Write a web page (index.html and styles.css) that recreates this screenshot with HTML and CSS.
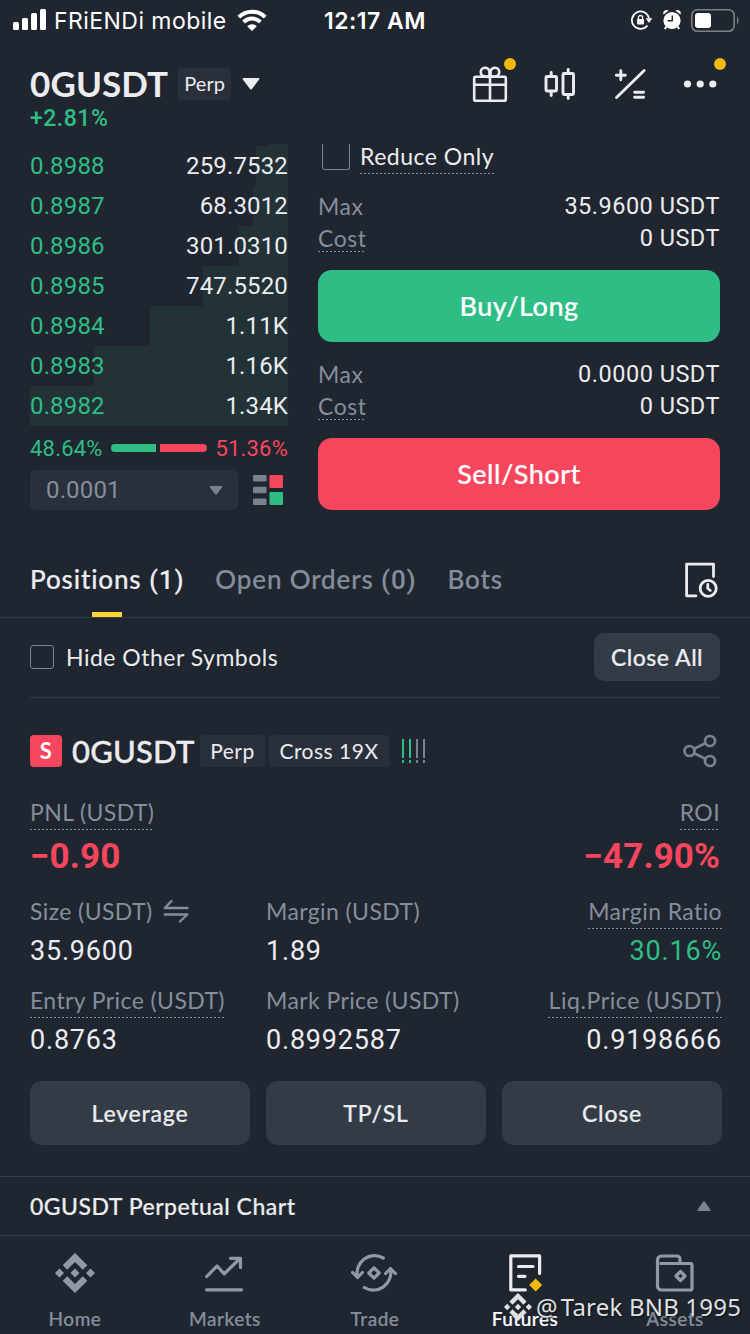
FILE: index.html
```html
<!DOCTYPE html>
<html lang="en">
<head>
    <meta charset="UTF-8">
    <meta name="viewport" content="width=device-width, initial-scale=1.0">
    <title>0GUSDT Perp</title>
    <link rel="stylesheet" href="styles.css">
</head>
<body>
    <div class="status-bar">
        <div class="carrier">
            <svg width="34" height="22" viewBox="0 0 34 22" fill="#fff">
                <rect x="0" y="13" width="6" height="8" rx="1.5"/>
                <rect x="9" y="9" width="6" height="12" rx="1.5"/>
                <rect x="18" y="4" width="6" height="17" rx="1.5"/>
                <rect x="27" y="0" width="6" height="21" rx="1.5"/>
            </svg>
            <span class="carrier-name">FRiENDi mobile</span>
            <svg width="30" height="22" viewBox="0 0 30 22" fill="none" stroke="#fff" stroke-width="4">
                <path d="M1.8 8.2a18.6 18.6 0 0 1 26.4 0"/>
                <path d="M6.6 13a12 12 0 0 1 16.8 0"/>
                <path d="M15 22l-4.8-4.8a6.8 6.8 0 0 1 9.6 0z" fill="#fff" stroke="none"/>
            </svg>
        </div>
        <div class="time">12:17 AM</div>
        <div class="status-icons">
            <svg width="22" height="20" viewBox="0 0 22 20" fill="none" stroke="#fff" stroke-width="1.7">
                <path d="M16.5 15.5A8.7 8.7 0 1 1 18 8"/>
                <path d="M14.7 8.3h6.6L18 13z" fill="#fff" stroke="none"/>
                <rect x="6" y="9" width="7" height="5.5" rx="1" fill="#fff" stroke="none"/>
                <path d="M7.4 9.5V7.6a2.1 2.1 0 0 1 4.2 0v1.9" stroke-width="1.3"/>
            </svg>
            <svg width="18" height="20" viewBox="0 0 18 20" fill="#fff">
                <circle cx="9" cy="10.5" r="8.6"/>
                <path d="M.5 4.5a3.2 3.2 0 0 1 5-3.7zM17.5 4.5a3.2 3.2 0 0 0-5-3.7z"/>
                <path d="M3.5 16.5L1.8 19M14.5 16.5l1.7 2.5" stroke="#fff" stroke-width="2"/>
                <path d="M9.3 5.5v5.3H4.6" fill="none" stroke="#202630" stroke-width="1.5"/>
            </svg>
            <svg width="48" height="23" viewBox="0 0 48 23">
                <rect x=".8" y=".8" width="42.4" height="21.4" rx="5.5" fill="none" stroke="#7b7f87" stroke-width="1.6"/>
                <rect x="4" y="4" width="16" height="15" rx="3" fill="#fff"/>
                <path d="M46 7.500c2 1.500 2 6.500 0 8z" fill="#7b7f87"/>
            </svg>
        </div>
    </div>

    <div class="header">
        <div class="pair">
            <div class="pair-row">
                <span class="pair-name">0GUSDT</span>
                <span class="tag">Perp</span>
                <svg width="18" height="12" viewBox="0 0 18 12" fill="#eaecef"><path d="M1.500 0h15q1.500 0 .6 1.400L10 11q-1 1.100-2 0L.9 1.400Q0 0 1.500 0z"/></svg>
            </div>
            <div class="change">+2.81%</div>
        </div>
        <div class="header-icons">
            <div class="header-icon">
                <svg width="36" height="40" viewBox="0 0 36 40" fill="none" stroke="#eaecef" stroke-width="2.6">
                    <rect x="2.200" y="12.700" width="31.600" height="24" rx="1.500"/>
                    <path d="M2 20.800h32M18 8v29"/>
                    <path d="M17.500 12.500h-5a4.400 4.400 0 1 1 5-5zM18.500 12.500h5a4.400 4.400 0 1 0-5-5z"/>
                </svg>
                <span class="dot"></span>
            </div>
            <div class="header-icon">
                <svg width="36" height="40" viewBox="0 0 36 40" fill="none" stroke="#eaecef" stroke-width="2.9" stroke-linecap="round">
                    <rect x="4" y="12.500" width="10.500" height="14.500" rx="1"/>
                    <rect x="21" y="9.500" width="10.500" height="21" rx="1"/>
                    <path d="M9.200 8.500v4M9.200 27.500v4M26.200 5.500v4M26.200 30.500v4"/>
                </svg>
            </div>
            <div class="header-icon">
                <svg width="36" height="40" viewBox="0 0 36 40" fill="none" stroke="#eaecef" stroke-width="2.9" stroke-linecap="round">
                    <path d="M4.500 33.500L32.200 6.500M4.300 11.200h9M8.800 6.700v9M22.600 28.300h9M22.600 33.300h9"/>
                </svg>
            </div>
            <div class="header-icon">
                <svg width="36" height="40" viewBox="0 0 36 40" fill="#eaecef">
                    <circle cx="5.500" cy="20" r="3.600"/><circle cx="18.200" cy="20" r="3.600"/><circle cx="30.800" cy="20" r="3.600"/>
                </svg>
                <span class="dot"></span>
            </div>
        </div>
    </div>

    <div class="trade">
        <div class="book">
            <div class="book-edge"></div>
            <div class="book-row" style="--depth: 32px"><span>0.8988</span><span class="qty">259.7532</span></div>
            <div class="book-row" style="--depth: 35px"><span>0.8987</span><span class="qty">68.3012</span></div>
            <div class="book-row" style="--depth: 49px"><span>0.8986</span><span class="qty">301.0310</span></div>
            <div class="book-row" style="--depth: 85px"><span>0.8985</span><span class="qty">747.5520</span></div>
            <div class="book-row" style="--depth: 138px"><span>0.8984</span><span class="qty">1.11K</span></div>
            <div class="book-row" style="--depth: 194px"><span>0.8983</span><span class="qty">1.16K</span></div>
            <div class="book-row" style="--depth: 258px"><span>0.8982</span><span class="qty">1.34K</span></div>
            <div class="ratio">
                <span class="ratio-buy">48.64%</span>
                <div class="ratio-bar"><div class="bar-buy"></div><div class="bar-sell"></div></div>
                <span class="ratio-sell">51.36%</span>
            </div>
            <div class="book-tools">
                <div class="tick-select">
                    <span>0.0001</span>
                    <svg width="14" height="9" viewBox="0 0 14 9" fill="#7b828d"><path d="M1.500 0h11q1.500 0 .6 1.300L8 8q-1 1.200-2 0L.9 1.300Q0 0 1.500 0z"/></svg>
                </div>
                <svg width="30" height="30" viewBox="0 0 30 30">
                    <g fill="#7b828d">
                        <rect y="0" width="13.500" height="6.500" rx="1"/>
                        <rect y="11.700" width="13.500" height="6.500" rx="1"/>
                        <rect y="23.500" width="13.500" height="6.500" rx="1"/>
                    </g>
                    <rect x="16.500" width="13.500" height="13" rx="1" fill="#f6465d"/>
                    <rect x="16.500" y="17" width="13.500" height="13" rx="1" fill="#2ebd85"/>
                </svg>
            </div>
        </div>

        <div class="order">
            <div class="reduce">
                <span class="checkbox-cut"></span>
                <span class="reduce-label dashed">Reduce Only</span>
            </div>
            <div class="limits">
                <div class="limit"><span>Max</span><span class="amount">35.9600 USDT</span></div>
                <div class="limit"><span class="dashed">Cost</span><span class="amount">0 USDT</span></div>
            </div>
            <button class="btn-order buy">Buy/Long</button>
            <div class="limits">
                <div class="limit"><span>Max</span><span class="amount">0.0000 USDT</span></div>
                <div class="limit"><span class="dashed">Cost</span><span class="amount">0 USDT</span></div>
            </div>
            <button class="btn-order sell">Sell/Short</button>
        </div>
    </div>

    <div class="tabs">
        <div class="tab active">Positions <span class="count">(1)</span></div>
        <div class="tab">Open Orders <span class="count">(0)</span></div>
        <div class="tab">Bots</div>
        <svg class="history" width="36" height="40" viewBox="0 0 36 40" fill="none" stroke="#eaecef" stroke-width="2.8" stroke-linecap="round" stroke-linejoin="round">
            <path d="M29.500 16.500V4.200H2.600v31.600H12"/>
            <circle cx="24.200" cy="28.400" r="8"/>
            <path d="M23.800 24.500v4l2.500 2"/>
        </svg>
    </div>

    <div class="filter">
        <span class="checkbox"></span>
        <span class="filter-label">Hide Other Symbols</span>
        <button class="close-all">Close All</button>
    </div>

    <div class="position">
        <div class="position-head">
            <span class="side">S</span>
            <span class="position-name">0GUSDT</span>
            <span class="tag tag-perp">Perp</span>
            <span class="tag tag-cross">Cross 19X</span>
            <svg class="risk" width="26" height="26" viewBox="0 0 26 26">
                <path d="M2 1v19M9 1v19M2 22v3M9 22v3" stroke="#2ebd85" stroke-width="2"/>
                <path d="M16 1v19M23 1v19M16 22v3M23 22v3" stroke="#7b828d" stroke-width="2"/>
            </svg>
            <svg class="share" width="34" height="34" viewBox="0 0 34 34" fill="none" stroke="#7b828d" stroke-width="2.7">
                <circle cx="6.500" cy="17" r="5"/><circle cx="27" cy="7" r="5"/><circle cx="27" cy="27" r="5"/>
                <path d="M11 14.800l11.500-5.600M11 19.200l11.500 5.600"/>
            </svg>
        </div>

        <div class="pnl-row">
            <div><div class="label"><span class="dashed">PNL (USDT)</span></div><div class="pnl">−0.90</div></div>
            <div class="right"><div class="label"><span class="dashed">ROI</span></div><div class="pnl">−47.90%</div></div>
        </div>

        <div class="stats">
            <div class="stat">
                <div class="label">Size (USDT)
                    <svg width="26" height="24" viewBox="0 0 26 24" fill="none" stroke="#848e9c" stroke-width="2.4" stroke-linecap="round" stroke-linejoin="round"><path d="M24.500 9H1.800L8.500 2M1.800 15.500h22.500L17 22.500"/></svg>
                </div>
                <div class="value">35.9600</div>
            </div>
            <div class="stat"><div class="label">Margin (USDT)</div><div class="value">1.89</div></div>
            <div class="stat right"><div class="label"><span class="dashed">Margin Ratio</span></div><div class="value green">30.16%</div></div>
            <div class="stat"><div class="label"><span class="dashed">Entry Price (USDT)</span></div><div class="value">0.8763</div></div>
            <div class="stat"><div class="label">Mark Price (USDT)</div><div class="value">0.8992587</div></div>
            <div class="stat right"><div class="label"><span class="dashed liq">Liq.Price (USDT)</span></div><div class="value">0.9198666</div></div>
        </div>

        <div class="actions">
            <button>Leverage</button>
            <button>TP/SL</button>
            <button>Close</button>
        </div>
    </div>

    <div class="chart-bar">
        <span>0GUSDT Perpetual Chart</span>
        <svg width="14" height="10" viewBox="0 0 14 10" fill="#7b828d"><path d="M1.200 10h11.600q1.500 0 .6-1.300L8 .8Q7-.4 6 .8L.6 8.700Q-.3 10 1.200 10z"/></svg>
    </div>

    <div class="nav">
        <div class="nav-item">
            <svg width="40" height="40" viewBox="0 0 40 40" fill="#9299a6">
                <path d="M20 0l12.300 12.300-4.500 4.500-7.800-7.800-7.800 7.800-4.500-4.500zM20 40l12.300-12.300-4.500-4.500-7.800 7.800-7.800-7.800-4.500 4.500zM20 15.500l4.500 4.500-4.500 4.500-4.500-4.500zM4.500 15.500L9 20l-4.500 4.500L0 20zM35.500 15.500L40 20l-4.500 4.500L31 20z"/>
            </svg>
            <span>Home</span>
        </div>
        <div class="nav-item">
            <svg width="40" height="40" viewBox="0 0 40 40" fill="none" stroke="#9299a6" stroke-width="3.2" stroke-linecap="round" stroke-linejoin="round">
                <path d="M1.800 23.500l10.200-10.500 7.200 7.800L35 5.500M25.500 5.300h10V14.500M1.600 36.800h35"/>
            </svg>
            <span>Markets</span>
        </div>
        <div class="nav-item">
            <svg width="48" height="40" viewBox="0 0 48 40" fill="none" stroke="#9299a6" stroke-width="3.2" stroke-linecap="round" stroke-linejoin="round">
                <path d="M32.300 5A17.500 17.500 0 0 0 6.500 24M1.600 19.500l4.900 5 4.900-5M13.300 34.500A17.500 17.500 0 0 0 39.500 16M34.600 20.500l4.900-5 4.900 5M23 14.800l5.200 5.200-5.200 5.200-5.200-5.200z"/>
            </svg>
            <span>Trade</span>
        </div>
        <div class="nav-item active">
            <svg width="40" height="40" viewBox="0 0 40 40" fill="none" stroke="#eaecef" stroke-width="3.2" stroke-linecap="round" stroke-linejoin="round">
                <path d="M34.600 20.500V2.900H5.800v34h14.500M13.500 13.500h14.500M13.500 23.300h6.500"/>
                <path d="M30.700 25.500l6.500 6.500-6.500 6.500-6.500-6.500z" fill="#f0b90b" stroke="none"/>
            </svg>
            <span>Futures</span>
        </div>
        <div class="nav-item">
            <svg width="40" height="40" viewBox="0 0 40 40" fill="none" stroke="#9299a6" stroke-width="3.2" stroke-linejoin="round">
                <path d="M25 10.500V6a3 3 0 0 0-3-3H6.500a4 4 0 0 0-4 4v26a4 4 0 0 0 4 4H35.500a1.500 1.500 0 0 0 1.500-1.500V12a1.500 1.500 0 0 0-1.500-1.500H4.500M25.500 18.500l4.500 4.500-4.500 4.500-4.500-4.500z"/>
            </svg>
            <span>Assets</span>
        </div>
    </div>

    <div class="watermark">
        <svg width="28" height="28" viewBox="0 0 40 40" fill="#dfe1e4">
            <path d="M20 0l12.300 12.300-4.500 4.500-7.800-7.800-7.800 7.800-4.500-4.500zM20 40l12.300-12.300-4.500-4.500-7.800 7.800-7.800-7.800-4.500 4.500zM20 15.500l4.500 4.500-4.500 4.500-4.500-4.500zM4.500 15.500L9 20l-4.500 4.500L0 20zM35.500 15.500L40 20l-4.500 4.500L31 20z"/>
        </svg>
        <span class="at">@</span><span>Tarek BNB 1995</span>
    </div>
</body>
</html>
```
FILE: styles.css
```css
* {
    box-sizing: border-box;
}

body {
    margin: 0;
    width: 750px;
    height: 1334px;
    overflow: hidden;
    position: relative;
    background-color: #202630;
    color: #eaecef;
    font-family: Lato, sans-serif;
    font-size: 23px;
    letter-spacing: 0.5px;
}

button {
    border: none;
    padding: 0 0 1px;
    color: #eaecef;
    font-family: inherit;
    font-weight: 500;
    letter-spacing: inherit;
    -webkit-text-stroke: 0.2px;
}

svg {
    display: block;
    flex: none;
}

.status-bar {
    display: grid;
    grid-template-columns: 1fr auto 1fr;
    align-items: center;
    height: 40px;
    padding: 0 11px 0 13px;
    font-family: Inter, sans-serif;
    color: #fff;
    letter-spacing: 0;
}

.carrier {
    display: flex;
    align-items: center;
    gap: 7px;
}

.carrier-name {
    font-size: 23px;
    letter-spacing: 0.45px;
    margin-right: 3px;
    padding-top: 2px;
}

.time {
    padding-top: 2px;
    font-size: 23px;
    font-weight: 600;
    letter-spacing: 0.5px;
    margin-left: -2px;
}

.status-icons {
    display: flex;
    align-items: center;
    justify-content: flex-end;
    gap: 10px;
}

.header {
    display: flex;
    justify-content: space-between;
    height: 104px;
    padding: 24px 30px 0;
}

.pair-row {
    display: flex;
    align-items: center;
    height: 40px;
}

.pair-name {
    font-size: 35px;
    font-weight: 700;
    letter-spacing: 0.1px;
    margin-right: 10px;
    padding-bottom: 2px;
}

.tag {
    height: 32px;
    line-height: 31px;
    padding: 0 6px;
    border-radius: 4px;
    background-color: #2a303b;
    font-size: 20px;
    letter-spacing: 0.1px;
    white-space: nowrap;
}

.pair-row svg {
    margin-left: 11px;
}

.change {
    font-family: Roboto, sans-serif;
    font-size: 23px;
    font-weight: 500;
    line-height: 30px;
    color: #2ebd85;
}

.header-icons {
    display: flex;
    gap: 34px;
    padding-right: 2px;
}

.header-icon {
    position: relative;
    height: 40px;
}

.dot {
    position: absolute;
    top: -6px;
    right: -8px;
    width: 12px;
    height: 12px;
    border-radius: 50%;
    background-color: #f0b90b;
}

.trade {
    display: flex;
    gap: 30px;
    height: 396px;
    padding: 0 30px;
}

.book {
    width: 258px;
    font-family: Roboto, sans-serif;
    font-size: 24px;
    letter-spacing: 0.15px;
    color: #2ebd85;
}

.book-edge {
    width: 19px;
    height: 2px;
    margin-left: auto;
    background-color: #223237;
}

.book-row {
    display: flex;
    justify-content: space-between;
    height: 40px;
    line-height: 41px;
    background: linear-gradient(#223237, #223237) right / var(--depth) 100% no-repeat;
}

.qty {
    color: #eaecef;
}

.ratio {
    display: flex;
    align-items: center;
    justify-content: space-between;
    height: 44px;
    font-size: 22px;
    letter-spacing: 0.2px;
}

.ratio-sell {
    color: #f6465d;
}

.ratio-bar {
    display: flex;
    gap: 4px;
    width: 96px;
    height: 8px;
    border-radius: 4px;
    overflow: hidden;
}

.bar-buy {
    width: 45px;
    background-color: #2ebd85;
}

.bar-sell {
    flex: 1;
    background-color: #f6465d;
}

.book-tools {
    display: flex;
    align-items: center;
    gap: 15px;
}

.tick-select {
    display: flex;
    align-items: center;
    justify-content: space-between;
    width: 208px;
    height: 40px;
    padding: 0 15px 0 16px;
    border-radius: 6px;
    background-color: #2a303b;
    color: #848e9c;
}

.order {
    width: 402px;
}

.reduce {
    display: flex;
    gap: 10px;
    height: 46px;
    padding-left: 4px;
}

.checkbox-cut {
    width: 28px;
    height: 26px;
    border: 1px solid #7b828d;
    border-top: none;
    border-radius: 0 0 3px 3px;
}

.dashed {
    background: repeating-linear-gradient(90deg, #848e9c 0 2px, transparent 2px 4px) bottom / 100% 1px no-repeat;
}

.reduce-label {
    height: 30px;
    line-height: 25px;
}

.limits {
    height: 80px;
    color: #848e9c;
}

.limit {
    display: flex;
    justify-content: space-between;
    height: 32px;
    line-height: 32px;
}

.limit .dashed {
    height: 30px;
}

.amount {
    color: #eaecef;
    font-family: Roboto, sans-serif;
    font-size: 23.5px;
    line-height: 33px;
}

.btn-order {
    display: block;
    width: 402px;
    height: 72px;
    margin-bottom: 16px;
    border-radius: 14px;
    font-size: 27px;
    color: #fff;
}

.buy {
    background-color: #2ebd85;
}

.sell {
    background-color: #f6465d;
}

.tabs {
    display: flex;
    gap: 31px;
    height: 78px;
    padding: 0 30px;
    border-bottom: 1px solid #333b47;
    font-size: 26px;
    font-weight: 500;
    letter-spacing: 0.85px;
    line-height: 79px;
    color: #848e9c;
    -webkit-text-stroke: 0.2px;
}

.count {
    font-family: Roboto, sans-serif;
    -webkit-text-stroke: 0;
}

.tab {
    position: relative;
    white-space: nowrap;
}

.tab.active {
    color: #eaecef;
}

.tab.active::after {
    content: "";
    position: absolute;
    left: 62px;
    bottom: 0;
    width: 30px;
    height: 5px;
    background-color: #fcd535;
}

.history {
    margin: 20px 0 0 auto;
}

.filter {
    display: flex;
    align-items: center;
    height: 80px;
    margin: 0 30px;
    padding-bottom: 1px;
    border-bottom: 1px solid #333b47;
}

.filter-label {
    padding-bottom: 1px;
}

.checkbox {
    width: 24px;
    height: 24px;
    margin-right: 12px;
    border: 1px solid #7b828d;
    border-radius: 3px;
}

.close-all {
    width: 126px;
    height: 48px;
    margin-left: auto;
    border-radius: 10px;
    background-color: #333b47;
    font-size: 23px;
}

.position {
    height: 479px;
    padding: 37px 28px 0 30px;
    border-bottom: 1px solid #333b47;
}

.position-head {
    display: flex;
    align-items: center;
    height: 32px;
}

.side {
    width: 32px;
    height: 32px;
    margin-right: 10px;
    border-radius: 4px;
    background-color: #f6465d;
    color: #fff;
    font-size: 22px;
    font-weight: 700;
    line-height: 31px;
    text-align: center;
}

.position-name {
    width: 128px;
    padding-bottom: 1px;
    font-size: 31px;
    font-weight: 500;
    letter-spacing: 0.2px;
    -webkit-text-stroke: 0.35px;
}

.tag-perp,
.tag-cross {
    padding: 0;
    width: 65px;
    margin-right: 4px;
    font-size: 21px;
    letter-spacing: 0.5px;
    text-align: center;
}

.tag-cross {
    width: 120px;
}

.risk {
    margin-left: 8px;
}

.share {
    margin: 0 5px 0 auto;
}

.label {
    display: flex;
    gap: 10px;
    height: 36px;
    line-height: 32px;
    letter-spacing: 0.4px;
    color: #848e9c;
}

.label .dashed {
    height: 34px;
}

.liq {
    letter-spacing: 0.6px;
}

.label svg {
    margin-top: 4px;
}

.right .label {
    justify-content: flex-end;
}

.right {
    text-align: right;
}

.pnl-row {
    display: flex;
    justify-content: space-between;
    margin-top: 29px;
    padding-right: 2px;
}

.pnl {
    height: 63px;
    font-family: Roboto, sans-serif;
    font-size: 35px;
    font-weight: 700;
    letter-spacing: 0.1px;
    line-height: 50px;
    color: #f6465d;
}

.stats {
    display: grid;
    grid-template-columns: 236px 1fr auto;
}

.stat {
    height: 89px;
}

.value {
    font-family: Roboto, sans-serif;
    font-size: 27px;
    letter-spacing: 0.8px;
    line-height: 40px;
}

.green {
    color: #2ebd85;
}

.actions {
    display: flex;
    gap: 16px;
    margin-top: 8px;
}

.actions button {
    width: 220px;
    height: 64px;
    border-radius: 12px;
    background-color: #333b47;
    font-size: 23px;
    letter-spacing: 0.8px;
}

.chart-bar {
    display: flex;
    align-items: center;
    justify-content: space-between;
    height: 59px;
    padding: 0 39px 0 30px;
    border-bottom: 1px solid #333b47;
    font-weight: 500;
    -webkit-text-stroke: 0.2px;
}

.chart-bar span {
    padding-bottom: 1px;
}

.nav {
    display: grid;
    grid-template-columns: repeat(5, 1fr);
    height: 98px;
    padding-top: 17px;
    font-size: 19px;
    font-weight: 500;
    color: #848e9c;
    -webkit-text-stroke: 0.2px;
}

.nav-item {
    display: flex;
    flex-direction: column;
    align-items: center;
    gap: 14px;
}

.nav-item.active {
    color: #fff;
}

.watermark {
    position: absolute;
    left: 504px;
    top: 1289px;
    display: flex;
    align-items: center;
    height: 36px;
    font-family: "Noto Sans", sans-serif;
    font-size: 24px;
    letter-spacing: 0.2px;
    color: #dfe1e4;
    text-shadow: 1px 1px 2px #111;
    white-space: nowrap;
}

.watermark span {
    padding-bottom: 1px;
}

.at {
    margin: 0 3px 0 4px;
}
```
